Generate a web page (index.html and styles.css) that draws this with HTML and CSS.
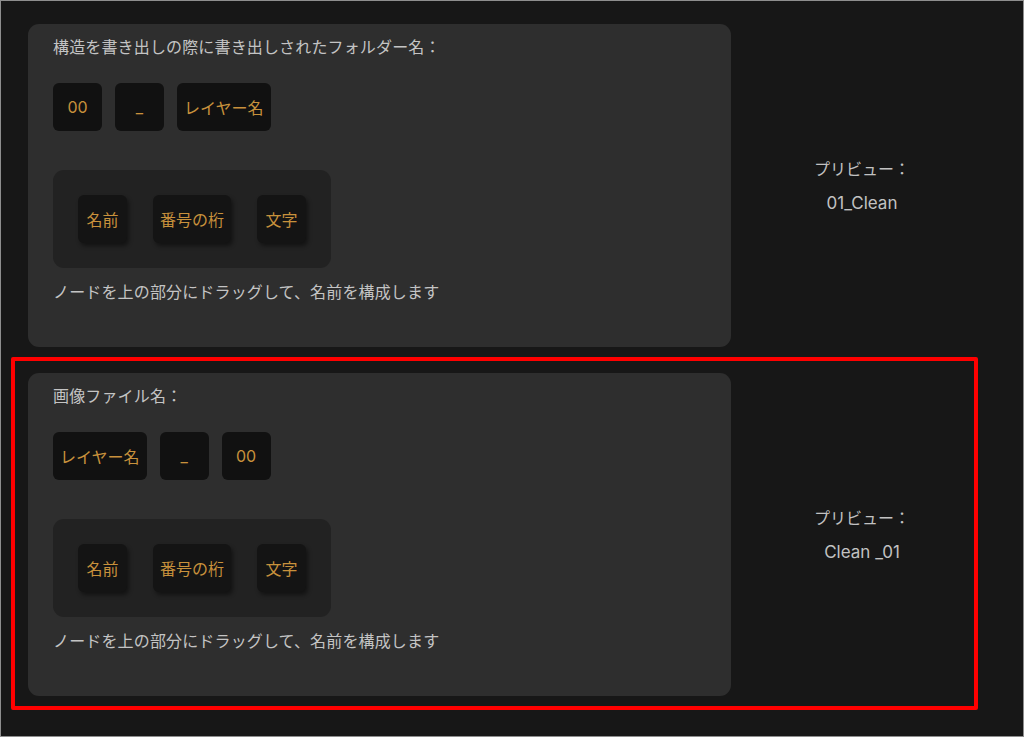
FILE: index.html
```html
<!DOCTYPE html>
<html lang="ja">
<head>
    <meta charset="UTF-8">
    <meta name="viewport" content="width=device-width, initial-scale=1.0">
    <title>書き出し名の設定</title>
    <link rel="stylesheet" href="styles.css">
</head>
<body>

    <div class="frame">

        <!-- フォルダー名 -->
        <div class="section">
            <div class="card">
                <p class="card-title">構造を書き出しの際に書き出しされたフォルダー名：</p>
                <div class="slots">
                    <span class="chip">00</span>
                    <span class="chip">_</span>
                    <span class="chip">レイヤー名</span>
                </div>
                <div class="palette">
                    <span class="chip chip-node">名前</span>
                    <span class="chip chip-node">番号の桁</span>
                    <span class="chip chip-node">文字</span>
                </div>
                <p class="hint">ノードを上の部分にドラッグして、名前を構成します</p>
            </div>
            <div class="preview">
                <p class="preview-label">プリビュー：</p>
                <p class="preview-value">01_Clean</p>
            </div>
        </div>

        <!-- 画像ファイル名 -->
        <div class="section">
            <div class="card">
                <p class="card-title">画像ファイル名：</p>
                <div class="slots">
                    <span class="chip">レイヤー名</span>
                    <span class="chip">_</span>
                    <span class="chip">00</span>
                </div>
                <div class="palette">
                    <span class="chip chip-node">名前</span>
                    <span class="chip chip-node">番号の桁</span>
                    <span class="chip chip-node">文字</span>
                </div>
                <p class="hint">ノードを上の部分にドラッグして、名前を構成します</p>
            </div>
            <div class="preview">
                <p class="preview-label">プリビュー：</p>
                <p class="preview-value">Clean _01</p>
            </div>
        </div>

        <div class="highlight"></div>
    </div>

</body>
</html>
```

FILE: styles.css
```css
* {
    box-sizing: border-box;
}

body {
    margin: 0;
    padding: 0;
    font-family: 'Inter', 'Noto Sans CJK JP', sans-serif;
    background: #171717;
    color: #c2c2c2;
    overflow: hidden;
}

p {
    margin: 0;
}

.frame {
    position: relative;
    width: 100vw;
    height: 100vh;
    border: 1px solid #8e8e8e;
    background: #171717;
    padding: 23px 30px 0 27px;
    display: flex;
    flex-direction: column;
    gap: 26px;
}

.section {
    display: flex;
}

.card {
    width: 703px;
    background: #2e2e2e;
    border-radius: 11px;
    padding: 13px 25px 45px;
}

.card-title,
.hint {
    font-size: 16px;
    line-height: 20px;
    letter-spacing: 0.15px;
    color: #c4c4c4;
}

.slots {
    display: flex;
    gap: 13px;
    margin-top: 26px;
}

.chip {
    display: flex;
    align-items: center;
    justify-content: center;
    min-width: 49px;
    height: 48px;
    padding: 0 7px;
    background: #111111;
    border-radius: 6px;
    color: #c8913c;
    font-size: 16px;
}

.palette {
    display: flex;
    width: fit-content;
    gap: 26px;
    margin-top: 39px;
    padding: 25px;
    background: #222222;
    border-radius: 11px;
}

.chip-node {
    background: #141414;
    box-shadow: 2px 3px 4px rgba(0, 0, 0, 0.45);
}

.hint {
    margin-top: 14px;
}

.preview {
    flex: 1;
    display: flex;
    flex-direction: column;
    align-items: center;
    justify-content: center;
    gap: 14px;
}

.preview-label,
.preview-value {
    font-size: 16px;
    line-height: 20px;
    color: #c2c2c2;
}

.preview-value {
    font-size: 17px;
}

.highlight {
    position: absolute;
    left: 10px;
    top: 356px;
    width: 967px;
    height: 353px;
    border: 4px solid #ff0000;
    border-radius: 2px;
    pointer-events: none;
}
```
